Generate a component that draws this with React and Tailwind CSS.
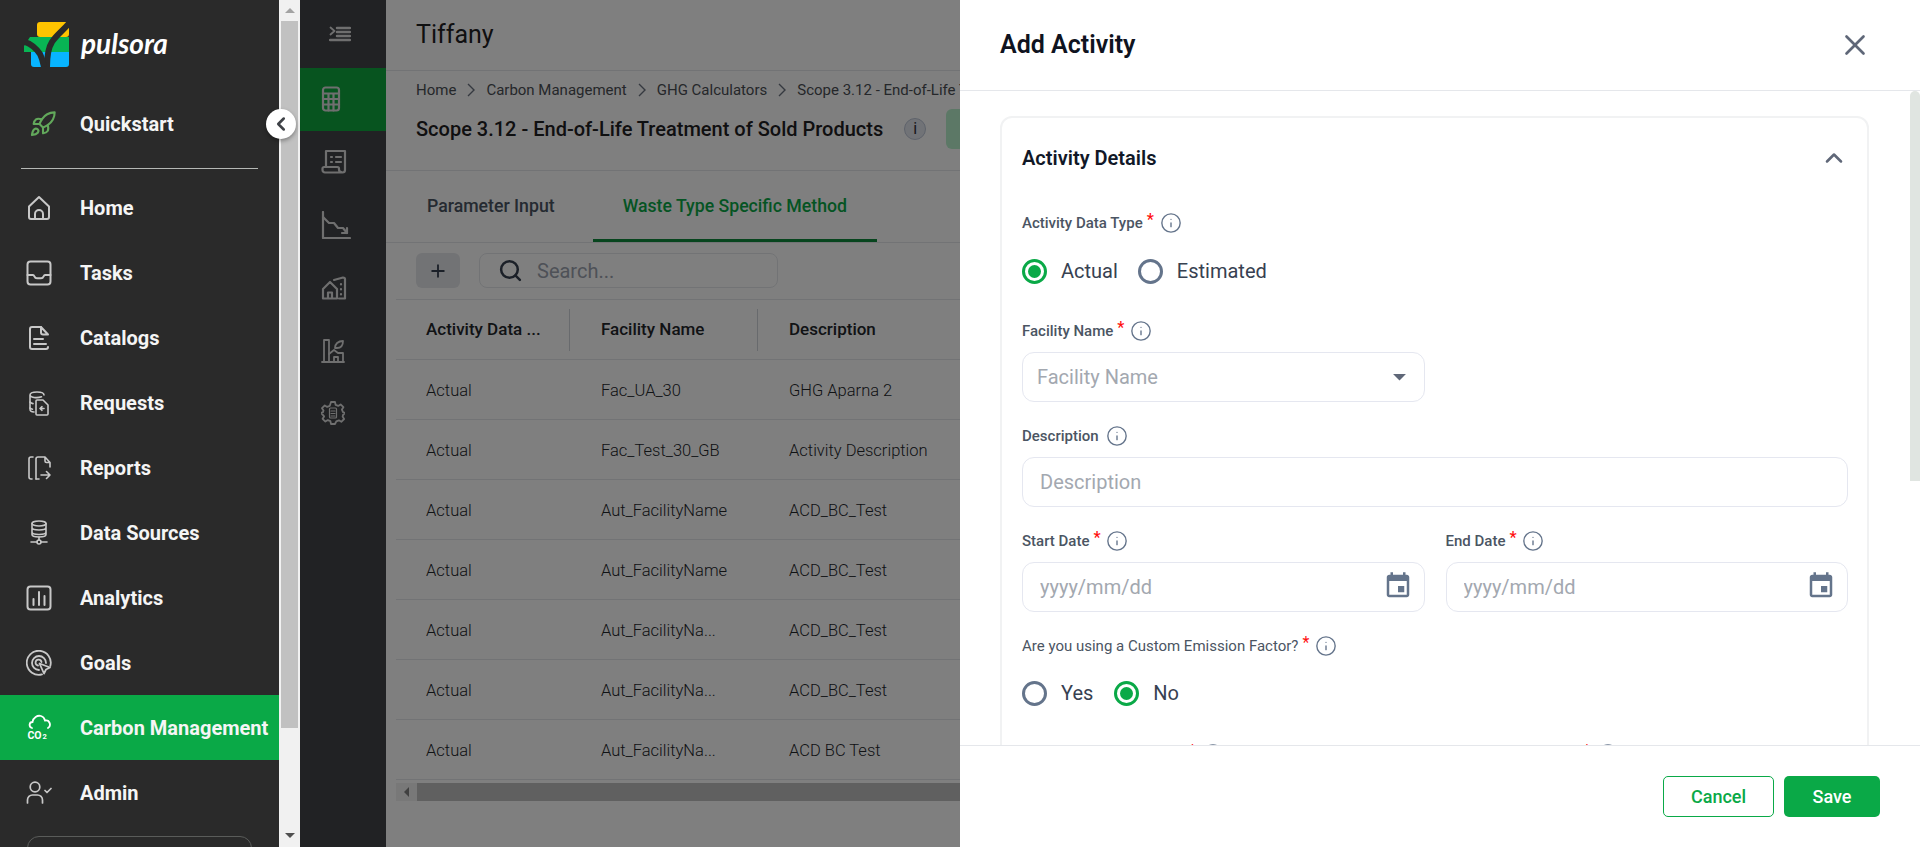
import React from 'react';
import { Info, X, ChevronUp, ChevronLeft, Rocket, Plus, Search } from 'lucide-react';

const Svg = ({ w = 24, h = 24, sw = 2, className = '', children }) => (
  <svg width={w} height={h} viewBox={`0 0 ${w} ${h}`} fill="none" stroke="currentColor" strokeWidth={sw} strokeLinecap="round" strokeLinejoin="round" className={className}>
    {children}
  </svg>
);

const navIcons = {
  home: (
    <Svg w={24} h={26}>
      <path d="M2 11.500 12 2l10 9.500V22a2 2 0 0 1-2 2H4a2 2 0 0 1-2-2z" />
      <path d="M8 24v-5a4 4 0 0 1 8 0v5" />
    </Svg>
  ),
  tasks: (
    <Svg w={26} h={26}>
      <rect x="1.500" y="1.500" width="23" height="23" rx="3" />
      <path d="M1.500 15H7c.8 0 1 .5 1.400 1.400.5 1.200 1.300 1.900 2.600 1.900h4c1.300 0 2.100-.7 2.600-1.900.4-.9.6-1.400 1.400-1.400h5.500" />
    </Svg>
  ),
  catalogs: (
    <Svg w={22} h={26}>
      <path d="M13 2H4a2 2 0 0 0-2 2v18a2 2 0 0 0 2 2h14a2 2 0 0 0 2-2" />
      <path d="M13 2l7 7.500h-5a2 2 0 0 1-2-2z" />
      <path d="M6 14h9M6 19h12" />
    </Svg>
  ),
  requests: (
    <Svg w={22} h={26} sw={1.600}>
      <path d="M2 5c0-4 14-4 14 0M2 5v14c0 2 2 3 4 3M2 5c0 2.500 7 3.500 11.500 1.800" />
      <path d="M2 12c.8 1 2 1.400 3 1.600M2 18c.8.8 1.500 1 2.500 1.200" />
      <path d="M9 10h6l5 5v9a1 1 0 0 1-1 1H9a1 1 0 0 1-1-1V11a1 1 0 0 1 1-1z" />
      <path d="M16 18.500h-4l2-1.800M12 18.500l2 1.800" />
    </Svg>
  ),
  reports: (
    <Svg w={24} h={26} sw={1.600}>
      <path d="M6 2H4a2 2 0 0 0-2 2v18a2 2 0 0 0 2 2h1" />
      <path d="M9 24V4a2 2 0 0 1 2-2h7l5 5.500V12M18 2v4a1.500 1.500 0 0 0 1.500 1.500H23" />
      <path d="M14 20h9M19.500 16.500 23 20l-3.500 3.500M9 24h3" />
    </Svg>
  ),
  data: (
    <Svg w={18} h={26} sw={1.600}>
      <ellipse cx="9" cy="3.500" rx="7" ry="2.500" />
      <path d="M2 3.500v11c0 1.500 3 2.500 7 2.500s7-1 7-2.500v-11M2 7.500c0 1.500 3 2.500 7 2.500s7-1 7-2.500M2 12c0 1.500 3 2.500 7 2.500s7-1 7-2.500" />
      <circle cx="9" cy="22" r="2" />
      <path d="M9 17v3M1 22h6M11 22h6" />
    </Svg>
  ),
  analytics: (
    <Svg w={26} h={26}>
      <rect x="1.500" y="1.500" width="23" height="23" rx="3" />
      <path d="M7.500 14v6M13 7v13M18.500 11v9" />
    </Svg>
  ),
  goals: (
    <Svg w={26} h={26} sw={1.800}>
      <path d="M16 24.300A12 12 0 1 1 24.300 16" />
      <path d="M13 20a7 7 0 1 1 7-7" />
      <path d="M12 15.500a3 3 0 1 1 3.500-3.500" />
      <path d="M13.500 13.500 24 17.500l-4 2-2 4z" />
    </Svg>
  ),
  carbon: (
    <svg width="24" height="28" viewBox="0 0 24 28" fill="none" stroke="currentColor" strokeWidth="1.800" strokeLinecap="round">
      <path d="M5 14C1.500 13 2 8 5.500 8c.5-4.500 5-7 8.500-6 2.500.7 3.500 2.500 4 4.500 5-1 6.500 5.500 3 7.500" />
      <text x="0.500" y="25" fontFamily="Roboto, sans-serif" fontSize="10.500" fontWeight="700" fill="currentColor" stroke="none">CO</text>
      <text x="15.500" y="25" fontFamily="Roboto, sans-serif" fontSize="7.500" fontWeight="700" fill="currentColor" stroke="none">2</text>
    </svg>
  ),
  admin: (
    <Svg w={26} h={24} sw={1.700}>
      <circle cx="9" cy="6" r="4.800" />
      <path d="M1.500 22v-3a5 5 0 0 1 5-5h5a5 5 0 0 1 5 5v3" />
      <path d="M19 9.500l2 2 4-4" />
    </Svg>
  ),
};

const navItems = [
  ['Home', 'home'],
  ['Tasks', 'tasks'],
  ['Catalogs', 'catalogs'],
  ['Requests', 'requests'],
  ['Reports', 'reports'],
  ['Data Sources', 'data'],
  ['Analytics', 'analytics'],
  ['Goals', 'goals'],
  ['Carbon Management', 'carbon'],
  ['Admin', 'admin'],
];

function NavRow({ label, icon }) {
  const active = label === 'Carbon Management';
  return (
    <div className={`flex h-[65px] shrink-0 items-center ${active ? 'bg-[#0aa947] text-white' : 'text-[#c8c8c8]'}`}>
      <div className="flex w-[80px] shrink-0 justify-center pr-[2px]">{navIcons[icon]}</div>
      <span className="text-[20px] font-bold whitespace-nowrap text-[#f5f5f5]">{label}</span>
    </div>
  );
}

function Sidebar() {
  return (
    <aside className="flex h-full w-[279px] shrink-0 flex-col overflow-hidden bg-[#2a2a2a]">
      <div className="flex h-[91px] shrink-0 items-start pt-[22px] pl-[24px]">
        <svg width="46" height="45" viewBox="0 0 46 45">
          <rect x="13" y="0" width="32" height="15" rx="3" fill="#ffc400" />
          <path d="M6 15h39v15H0v-6z" fill="#08b554" />
          <path d="M7 30h38v12a3 3 0 0 1-3 3H10a3 3 0 0 1-3-3z" fill="#08b4ff" />
          <path d="M46 0C40 8 33 12 28 20c-4 6-5 14-5 25" fill="none" stroke="#2a2a2a" strokeWidth="6" />
          <path d="M-2 19c8 2 14 7 18 13 2 4 3 8 4 13" fill="none" stroke="#2a2a2a" strokeWidth="6" />
        </svg>
        <span className="mt-[4px] ml-[11px] [font-family:Lato,sans-serif] text-[28px] leading-[34px] font-bold text-white italic">pulsora</span>
      </div>
      <div className="flex h-[65px] shrink-0 items-center">
        <div className="flex w-[80px] shrink-0 justify-center pl-[6px] text-[#62a85b]">
          <Rocket size={28} strokeWidth={1.800} />
        </div>
        <span className="text-[20px] font-bold text-[#f5f5f5]">Quickstart</span>
      </div>
      <div className="mx-[21px] mt-[12px] mb-[6px] h-px shrink-0 bg-[#b5b8b5]" />
      {navItems.map(([label, icon]) => (
        <NavRow key={label} label={label} icon={icon} />
      ))}
      <div className="mx-[27px] mt-[11px] h-[40px] shrink-0 rounded-xl border border-[#5a5c5a]" />
    </aside>
  );
}

function PageScrollbar() {
  return (
    <div className="flex h-full w-[21px] shrink-0 flex-col items-center bg-[#f1f1f1]">
      <div className="flex h-[21px] w-full items-center justify-center">
        <div className="h-0 w-0 border-x-[5px] border-b-[5px] border-x-transparent border-b-[#a3a3a3]" />
      </div>
      <div className="h-[707px] w-[17px] bg-[#c1c1c1]" />
      <div className="flex flex-1 items-end pb-[9px]">
        <div className="h-0 w-0 border-x-[5px] border-t-[5px] border-x-transparent border-t-[#505050]" />
      </div>
    </div>
  );
}

const railIcons = [
  <Svg w={26} h={26} sw={2.200} key="calc">
    <rect x="2" y="1.500" width="16" height="23" rx="2.500" />
    <path d="M2 7.500h16M2 13h16M2 18.500h16M7.500 7.500v17M12.500 7.500v17" />
  </Svg>,
  <Svg w={26} h={26} sw={2.200} key="receipt">
    <path d="M5 18V2h19v19c0 1.500-1 2.500-2.500 2.500H4c-1.500 0-2.500-1-2.500-2.500v-1.500a1.500 1.500 0 0 1 1.500-1.500h13.500a1.500 1.500 0 0 1 1.500 1.500v1c0 1 .7 2.500 2.500 2.500" />
    <path d="M10 8h1M15 8h5M10 13h1M15 13h5" />
  </Svg>,
  <Svg w={30} h={28} sw={2.200} key="chart">
    <path d="M2 1v26h27" />
    <path d="M2 6l6 6h5l4 5 5 0 4 5" />
    <path d="M26 17v5h-5" />
  </Svg>,
  <Svg w={26} h={24} sw={2.200} key="house">
    <path d="M2 22.500V13l7-7 7 7v9.500zM7 22.500v-6h4v6" />
    <path d="M13 4l9-2.500c1 0 2 .5 2 1.500v19.500h-6" />
    <path d="M20 8v.5M20 13v.5M20 18v.5" />
  </Svg>,
  <Svg w={24} h={24} sw={1.800} key="factory">
    <path d="M1 23h22M3 1h5v22M3 1v22" />
    <path d="M8 15l5-4 4 3h5v9" />
    <path d="M13 23v-5h4v5" />
    <path d="M14 9c0-4 3-7 8-7 0 4-2 7-6 7z" />
  </Svg>,
  <Svg w={24} h={26} sw={1.800} key="gear">
    <path d="M10 2h4l.6 2.800 2.600 1.100 2.400-1.500 2.800 2.800-1.500 2.400 1.100 2.600L24 13l-2 2-.4 1.600 1.500 2.400-2.800 2.800-2.400-1.500-2.600 1.100L14 24h-4l-.6-2.800-2.600-1.100-2.400 1.500-2.800-2.800 1.500-2.400L2 15l-2-2 2-.8.500-1.600L1 8.200l2.800-2.800 2.400 1.500 2.600-1.100z" />
    <rect x="8.500" y="8" width="7" height="10" rx="1" strokeWidth="1.200" />
    <path d="M10 11h4M10 13.500h4M10 16h4" strokeWidth="1.200" />
  </Svg>,
];

function Rail() {
  return (
    <div className="flex h-full w-[86px] shrink-0 flex-col bg-[#424448] text-[#dedede]">
      <div className="flex h-[68px] shrink-0 items-center pl-[29px]">
        <Svg w={22} h={16} sw={2.500}>
          <path d="M1.500 1.500l4 3.500-4 3.500" strokeWidth="1.800" />
          <path d="M8 2h13M8 6h13M8 10h13M1 14h20" />
        </Svg>
      </div>
      {railIcons.map((icon, i) => (
        <div key={i} className={`flex h-[62.800px] shrink-0 items-center pl-[21px] ${i === 0 ? 'bg-[#0fa83e]' : ''}`}>
          {icon}
        </div>
      ))}
    </div>
  );
}

const rows = [
  ['Actual', 'Fac_UA_30', 'GHG Aparna 2'],
  ['Actual', 'Fac_Test_30_GB', 'Activity Description'],
  ['Actual', 'Aut_FacilityName', 'ACD_BC_Test'],
  ['Actual', 'Aut_FacilityName', 'ACD_BC_Test'],
  ['Actual', 'Aut_FacilityNa...', 'ACD_BC_Test'],
  ['Actual', 'Aut_FacilityNa...', 'ACD_BC_Test'],
  ['Actual', 'Aut_FacilityNa...', 'ACD BC Test'],
];

function Main() {
  const crumbs = ['Home', 'Carbon Management', 'GHG Calculators'];
  return (
    <main className="h-full min-w-0 flex-1 overflow-hidden bg-white">
      <div className="flex h-[71px] items-center border-b border-[#e5e7eb] pl-[30px]">
        <h1 className="text-[25px] text-[#1f2023]">Tiffany</h1>
      </div>
      <div className="flex h-[100px] flex-col border-b border-[#e5e7eb] pl-[30px]">
        <div className="mt-[8px] flex h-[22px] items-center text-[15px] whitespace-nowrap text-[#4b4f55]">
          {crumbs.map((c) => (
            <React.Fragment key={c}>
              <span>{c}</span>
              <svg width="30" height="18" viewBox="0 0 30 18" fill="none" stroke="#6b7280" strokeWidth="1.400" className="shrink-0">
                <path d="M12 3l6 6-6 6" />
              </svg>
            </React.Fragment>
          ))}
          <span>Scope 3.12 - End-of-Life Treatment of Sold Products</span>
        </div>
        <div className="mt-[8px] flex h-[40px] items-center whitespace-nowrap">
          <h2 className="text-[20px] font-medium text-[#1f2023]">Scope 3.12 - End-of-Life Treatment of Sold Products</h2>
          <span className="ml-[21px] flex h-[22px] w-[22px] items-center justify-center rounded-full border border-[#bcc5d6] bg-[#e3e6ee] text-[16px] text-[#30343a]">i</span>
          <div className="ml-[20px] h-[40px] w-[120px] shrink-0 rounded-md bg-[#b8f0cc]" />
        </div>
      </div>
      <div className="flex h-[72px] border-b border-[#e5e7eb] pl-[8px] text-[17.700px] font-medium whitespace-nowrap">
        <div className="flex items-center border-y-[3px] border-transparent pr-[38px] pl-[33px] text-[#4b5563]">Parameter Input</div>
        <div className="flex items-center border-t-[3px] border-b-[3px] border-t-transparent border-b-[#0f8a3c] px-[30px] text-[#0aa947]">Waste Type Specific Method</div>
      </div>
      <div className="flex h-[56px] items-start gap-[19px] pt-[10px] pl-[30px]">
        <div className="flex h-[35px] w-[44px] items-center justify-center rounded-md bg-[#e5e7eb] text-[#374151]">
          <Plus size={20} strokeWidth={2.200} />
        </div>
        <div className="flex h-[35px] w-[299px] items-center rounded-lg border border-[#e5e7eb] pl-[18px]">
          <Search size={25} strokeWidth={2.400} className="text-[#374151]" />
          <span className="ml-[14px] text-[20px] text-[#9ca3af]">Search...</span>
        </div>
      </div>
      <div className="ml-[10px]">
        <div className="grid h-[61px] grid-cols-[174px_188px_1fr] items-center border-y border-[#e5e7eb] text-[17px] font-medium text-[#23262b]">
          <div className="flex h-[42px] items-center border-r border-[#d1d5db] pl-[30px]">Activity Data ...</div>
          <div className="flex h-[42px] items-center border-r border-[#d1d5db] pl-[31px]">Facility Name</div>
          <div className="pl-[31px]">Description</div>
        </div>
        {rows.map((r, i) => (
          <div key={i} className="grid h-[60px] grid-cols-[174px_188px_1fr] items-center border-b border-[#e5e7eb] pt-[4px] text-[16.500px] font-light text-[#23262b]">
            <div className="pl-[30px]">{r[0]}</div>
            <div className="pl-[31px]">{r[1]}</div>
            <div className="pl-[31px]">{r[2]}</div>
          </div>
        ))}
        <div className="mt-[3px] flex h-[18px] bg-[#f1f1f1]">
          <div className="flex w-[21px] items-center justify-center">
            <div className="h-0 w-0 border-y-[5px] border-r-[5px] border-y-transparent border-r-[#808080]" />
          </div>
          <div className="w-full bg-[#c1c1c1]" />
        </div>
      </div>
    </main>
  );
}

const Star = () => <span className="ml-[4px] w-[7px] -translate-y-[3px] text-[16px] leading-none text-[#ff0f0f]">*</span>;

const Label = ({ text, required, weight = 'font-medium' }) => (
  <div className={`flex h-[20px] items-center text-[15px] whitespace-nowrap text-[#4b5563] ${weight}`}>
    <span>{text}</span>
    {required && <Star />}
    <Info size={22} strokeWidth={1.500} className={`text-[#64748b] ${required ? 'ml-[6px]' : 'ml-[7px]'}`} />
  </div>
);

const Radio = ({ label, checked }) => (
  <div className="flex h-[26px] items-center gap-[14px]">
    <span className={`flex h-[25px] w-[25px] items-center justify-center rounded-full border-[3px] ${checked ? 'border-[#0aa947]' : 'border-[#64748b]'}`}>
      {checked && <span className="h-[13px] w-[13px] rounded-full bg-[#0aa947]" />}
    </span>
    <span className="text-[20px] text-[#374151]">{label}</span>
  </div>
);

const inputClass = 'h-[50px] w-full rounded-xl border-[1.500px] border-[#e5e7f0] text-[20px] outline-none placeholder:text-[#a3a8b0]';

const CalendarIcon = () => (
  <svg width="30" height="30" viewBox="0 0 24 24" fill="#64748b" className="absolute top-[9px] right-[12px]">
    <path d="M17 12h-5v5h5v-5zM16 1v2H8V1H6v2H5c-1.110 0-1.990.9-1.990 2L3 19c0 1.100.89 2 2 2h14c1.100 0 2-.9 2-2V5c0-1.100-.9-2-2-2h-1V1h-2zm3 18H5V8h14v11z" />
  </svg>
);

function DateField({ label }) {
  return (
    <div>
      <Label text={label} required />
      <div className="relative mt-[11px]">
        <input className={`${inputClass} pl-[17px]`} placeholder="yyyy/mm/dd" />
        <CalendarIcon />
      </div>
    </div>
  );
}

function ClippedLabel({ indent }) {
  return (
    <div className={`flex h-[20px] items-center ${indent}`}>
      <Star />
      <Info size={22} strokeWidth={1.500} className="ml-[6px] text-[#64748b]" />
    </div>
  );
}

function Drawer() {
  return (
    <section className="absolute inset-y-0 right-0 flex w-[960px] flex-col bg-white">
      <div className="flex h-[91px] shrink-0 items-center justify-between border-b border-[#e5e7eb] pr-[48px] pl-[40px]">
        <h2 className="text-[25px] font-semibold text-[#0f1320]">Add Activity</h2>
        <X size={34} strokeWidth={1.900} className="text-[#5f6778]" />
      </div>
      <div className="relative flex-1 overflow-hidden pt-[25px] pl-[40px]">
        <div className="absolute top-0 right-0 h-[390px] w-[10px] rounded-t-full bg-[#e0e5e1]" />
        <div className="w-[869px] rounded-xl border-2 border-[#f1f2f3] pt-[28px] pr-[19px] pl-[20px]">
          <div className="flex h-[24px] items-center justify-between">
            <h3 className="text-[20px] font-semibold text-[#111827]">Activity Details</h3>
            <ChevronUp size={28} strokeWidth={2.200} className="text-[#5f6778]" />
          </div>
          <div className="mt-[43px]">
            <Label text="Activity Data Type" required />
          </div>
          <div className="mt-[25px] flex gap-[20px]">
            <Radio label="Actual" checked />
            <Radio label="Estimated" />
          </div>
          <div className="mt-[37px]">
            <Label text="Facility Name" required />
          </div>
          <div className="relative mt-[11px] w-[402.500px]">
            <input className={`${inputClass} pl-[14px]`} placeholder="Facility Name" />
            <svg width="31" height="31" viewBox="0 0 24 24" fill="#5f6778" className="absolute top-[9px] right-[10px]">
              <path d="M7 10l5 5 5-5z" />
            </svg>
          </div>
          <div className="mt-[24px]">
            <Label text="Description" />
          </div>
          <input className={`${inputClass} mt-[11px] pl-[17px]`} placeholder="Description" />
          <div className="mt-[24px] grid grid-cols-2 gap-x-[21px]">
            <DateField label="Start Date" />
            <DateField label="End Date" />
          </div>
          <div className="mt-[24px]">
            <Label text="Are you using a Custom Emission Factor?" required weight="font-normal" />
          </div>
          <div className="mt-[24px] flex gap-[21px]">
            <Radio label="Yes" />
            <Radio label="No" checked />
          </div>
          <div className="mt-[38px] grid grid-cols-2 gap-x-[21px]">
            <ClippedLabel indent="pl-[163px]" />
            <ClippedLabel indent="pl-[134px]" />
          </div>
        </div>
      </div>
      <div className="flex h-[102px] shrink-0 items-start justify-end gap-[10px] border-t border-[#e5e7eb] bg-white pt-[30px] pr-[40px]">
        <button className="h-[41px] w-[111px] rounded-[5px] border-[1.500px] border-[#0aa947] text-[18px] font-medium text-[#0aa947]">Cancel</button>
        <button className="h-[41px] w-[96px] rounded-[5px] bg-[#0aa947] text-[18px] font-medium text-white">Save</button>
      </div>
    </section>
  );
}

export default function App() {
  return (
    <div className="relative flex h-[847px] w-[1920px] overflow-hidden bg-white [font-family:Roboto,sans-serif]">
      <Sidebar />
      <PageScrollbar />
      <Rail />
      <Main />
      {/* dim layer behind the drawer */}
      <div className="absolute inset-y-0 right-[960px] left-[300px] bg-black/50" />
      <Drawer />
      {/* collapse toggle sits over the scrollbar */}
      <button className="absolute top-[109px] left-[266px] flex h-[30px] w-[30px] items-center justify-center rounded-full bg-white text-[#3f4247] shadow-[0_2px_4px_rgba(0,0,0,0.35)]">
        <ChevronLeft size={22} strokeWidth={2.800} />
      </button>
    </div>
  );
}
